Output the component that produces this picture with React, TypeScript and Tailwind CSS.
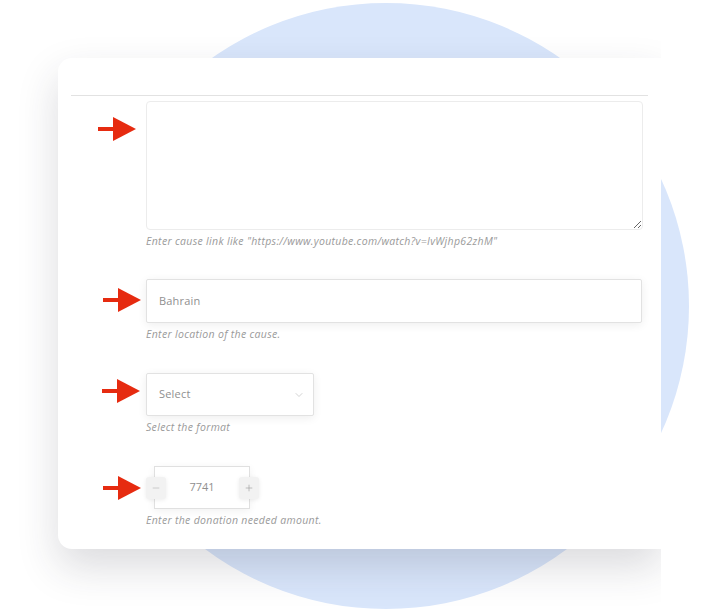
import { ChevronDown, Minus, Plus } from "lucide-react";

const font = "font-['Open_Sans','Liberation_Sans',sans-serif]";

function Arrow({ className = "" }: { className?: string }) {
  return (
    <svg width="38" height="24" viewBox="0 0 38 24" className={className}>
      <rect x="0" y="10" width="16" height="4" fill="#e62b10" />
      <polygon points="15,0 38,12 15,24" fill="#e62b10" />
    </svg>
  );
}

function Help({ children }: { children: React.ReactNode }) {
  return (
    <div className="mt-[4px] text-[10.5px] italic leading-[14px] tracking-[0.32px] text-[#9a9a9a]">{children}</div>
  );
}

export default function App() {
  return (
    <div className={`relative h-[611px] w-[720px] overflow-hidden bg-white ${font}`}>
      <div className="absolute left-[83px] top-[3px] h-[606px] w-[606px] rounded-full bg-[#d9e6fb]" />

      <div className="absolute left-0 top-0 h-[611px] w-[661px] overflow-hidden">
        <div className="ml-[58px] mt-[58px] w-[603px] rounded-l-[14px] bg-white pb-[22px] shadow-[0_18px_40px_rgba(40,40,60,0.17)]">
          <div className="h-[37px]" />
          <div className="mx-[13px] h-px bg-[#e2e2e2]" />

          <div className="mt-[5px] flex">
            <div className="flex w-[88px] shrink-0 justify-end pr-[10px] pt-[16px]">
              <Arrow />
            </div>
            <div>
              <textarea className="block h-[129px] w-[497px] resize-y rounded-[4px] border border-[#ececec] bg-white outline-none" />
              <Help>Enter cause link like "https://www.youtube.com/watch?v=IvWjhp62zhM"</Help>
            </div>
          </div>

          <div className="mt-[31px] flex">
            <div className="flex w-[88px] shrink-0 justify-end pr-[5px] pt-[9px]">
              <Arrow />
            </div>
            <div>
              <div className="flex h-[44px] w-[496px] items-center rounded-[2px] border border-[#e2e2e2] bg-white px-[12px] text-[11px] tracking-[0.2px] text-[#8f8f8f] shadow-[0_2px_10px_rgba(0,0,0,0.07)]">
                Bahrain
              </div>
              <Help>Enter location of the cause.</Help>
            </div>
          </div>

          <div className="mt-[32px] flex">
            <div className="flex w-[88px] shrink-0 justify-end pr-[6px] pt-[6px]">
              <Arrow />
            </div>
            <div>
              <div className="flex h-[43px] w-[168px] items-center justify-between rounded-[2px] border border-[#e2e2e2] bg-white pl-[12px] pr-[8px] text-[11px] tracking-[0.2px] text-[#8f8f8f] shadow-[0_2px_10px_rgba(0,0,0,0.07)]">
                <span>Select</span>
                <ChevronDown className="h-[12px] w-[12px] text-[#c4c4c4]" strokeWidth={1.5} />
              </div>
              <Help>Select the format</Help>
            </div>
          </div>

          <div className="mt-[32px] flex">
            <div className="flex w-[88px] shrink-0 justify-end pr-[5px] pt-[10px]">
              <Arrow />
            </div>
            <div>
              <div className="flex items-center">
                <div className="relative z-10 flex h-[22px] w-[20px] items-center justify-center rounded-[3px] bg-[#f2f2f2] text-[#b5b5b5] shadow-[0_1px_4px_rgba(0,0,0,0.08)]">
                  <Minus className="h-[10px] w-[10px]" strokeWidth={1.5} />
                </div>
                <div className="-ml-[12px] flex h-[43px] w-[96px] items-center justify-center border border-[#e0e0e0] bg-white text-[11px] text-[#8f8f8f] shadow-[0_2px_8px_rgba(0,0,0,0.06)]">
                  7741
                </div>
                <div className="relative z-10 -ml-[11px] flex h-[22px] w-[20px] items-center justify-center rounded-[3px] bg-[#f2f2f2] text-[#9a9a9a] shadow-[0_1px_4px_rgba(0,0,0,0.08)]">
                  <Plus className="h-[10px] w-[10px]" strokeWidth={1.5} />
                </div>
              </div>
              <Help>Enter the donation needed amount.</Help>
            </div>
          </div>
        </div>
      </div>
    </div>
  );
}
